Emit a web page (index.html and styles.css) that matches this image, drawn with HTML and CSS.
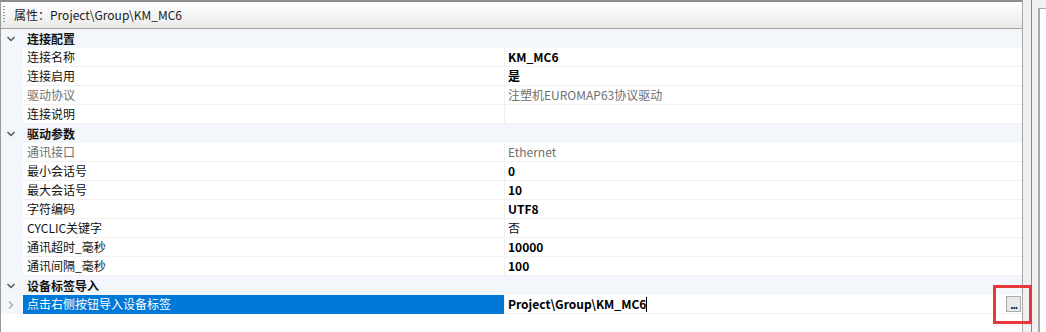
FILE: index.html
```html
<!DOCTYPE html>
<html lang="zh">
<head>
<meta charset="utf-8">
<link rel="stylesheet" href="styles.css">
</head>
<body>
<div class="frame">
  <div class="panel">
    <div class="titlebar">
      <span class="grip"></span>
      <span class="title">属性：Project\Group\KM_MC6</span>
    </div>
    <div class="grid">
      <div class="cat"><span class="gut"><svg width="10" height="10" viewBox="0 0 10 10"><path d="M1.5 3 L5 6.5 L8.5 3" fill="none" stroke="#555" stroke-width="1.4"/></svg></span><span class="catname">连接配置</span></div>
      <div class="row"><span class="gut"></span><span class="name">连接名称</span><span class="val b">KM_MC6</span></div>
      <div class="row"><span class="gut"></span><span class="name">连接启用</span><span class="val b">是</span></div>
      <div class="row"><span class="gut"></span><span class="name dim">驱动协议</span><span class="val dim">注塑机EUROMAP63协议驱动</span></div>
      <div class="row"><span class="gut"></span><span class="name">连接说明</span><span class="val"></span></div>
      <div class="cat"><span class="gut"><svg width="10" height="10" viewBox="0 0 10 10"><path d="M1.5 3 L5 6.5 L8.5 3" fill="none" stroke="#555" stroke-width="1.4"/></svg></span><span class="catname">驱动参数</span></div>
      <div class="row"><span class="gut"></span><span class="name dim">通讯接口</span><span class="val dim">Ethernet</span></div>
      <div class="row"><span class="gut"></span><span class="name">最小会话号</span><span class="val b">0</span></div>
      <div class="row"><span class="gut"></span><span class="name">最大会话号</span><span class="val b">10</span></div>
      <div class="row"><span class="gut"></span><span class="name">字符编码</span><span class="val b">UTF8</span></div>
      <div class="row"><span class="gut"></span><span class="name">CYCLIC关键字</span><span class="val">否</span></div>
      <div class="row"><span class="gut"></span><span class="name">通讯超时_毫秒</span><span class="val b">10000</span></div>
      <div class="row"><span class="gut"></span><span class="name">通讯间隔_毫秒</span><span class="val b">100</span></div>
      <div class="cat"><span class="gut"><svg width="10" height="10" viewBox="0 0 10 10"><path d="M1.5 3 L5 6.5 L8.5 3" fill="none" stroke="#555" stroke-width="1.4"/></svg></span><span class="catname">设备标签导入</span></div>
      <div class="row sel"><span class="gut"><svg width="10" height="10" viewBox="0 0 10 10"><path d="M3 1.5 L6.5 5 L3 8.5" fill="none" stroke="#a8a8a8" stroke-width="1.4"/></svg></span><span class="name">点击右侧按钮导入设备标签</span><span class="val b edit"><span>Project\Group\KM_MC6</span><span class="caret"></span><span class="spacer"></span><span class="dots">...</span></span></div>
    </div>
    <div class="hl"></div>
  </div>
  <div class="split"></div>
  <div class="side"><div class="sideinner"></div></div>
</div>
</body>
</html>
```

FILE: styles.css
```css
html, body {
  margin: 0;
  padding: 0;
  background: #f0f0f0;
}
body {
  width: 1046px;
  height: 332px;
  overflow: hidden;
  font-family: "Noto Sans CJK SC", "Noto Sans", sans-serif;
  font-size: 12px;
  color: #000;
}
.frame {
  display: flex;
  height: 332px;
}
.panel {
  position: relative;
  width: 1021px;
  border-left: 1px solid #9a9a9a;
  border-right: 1px solid #a8a8a8;
  background: #fff;
  display: flex;
  flex-direction: column;
}
.titlebar {
  height: 26px;
  border-top: 2px solid #8c8c8c;
  border-bottom: 1px solid #a0a0a0;
  background: linear-gradient(#ffffff, #e9e9e9);
  display: flex;
  align-items: center;
}
.grip {
  width: 2px;
  height: 18px;
  margin-left: 2px;
  margin-right: 9px;
  background-image: linear-gradient(#9a9a9a 50%, transparent 50%);
  background-size: 2px 3px;
}
.title {
  color: #1b1b1b;
  line-height: 16px;
}
.grid {
  display: flex;
  flex-direction: column;
}
.cat, .row {
  height: 19px;
  display: flex;
  align-items: stretch;
}
.cat {
  background: #f3f6fa;
}
.gut {
  width: 22px;
  flex: none;
  display: flex;
  align-items: center;
  justify-content: center;
  padding-right: 2px;
  box-sizing: border-box;
  background: #f3f6fa;
}
.catname {
  font-weight: bold;
  padding-left: 4px;
  line-height: 19px;
  color: #111;
}
.name {
  width: 481px;
  flex: none;
  box-sizing: border-box;
  padding-left: 4px;
  line-height: 18px;
  border-bottom: 1px solid #f0f0f0;
  color: #111;
}
.val {
  flex: 1;
  padding-left: 3px;
  line-height: 18px;
  border-left: 1px solid #f0f0f0;
  border-bottom: 1px solid #f0f0f0;
  color: #111;
}
.b {
  font-weight: bold;
  color: #000;
}
.dim {
  color: #707070;
  font-weight: normal;
}
.sel .name {
  background: #0078d7;
  color: #fff;
  border-bottom-color: #0078d7;
}
.edit {
  display: flex;
  align-items: center;
}
.caret {
  width: 1px;
  height: 15px;
  background: #000;
  margin-left: 0;
}
.spacer {
  flex: 1;
}
.dots {
  width: 13px;
  height: 14px;
  border: 1px solid #adadad;
  background: #e8e8e8;
  font-weight: bold;
  font-size: 10px;
  line-height: 16px;
  text-align: center;
  letter-spacing: -1px;
  margin-right: 1px;
  box-sizing: content-box;
  color: #111;
}
.hl {
  position: absolute;
  left: 992px;
  top: 285px;
  width: 33px;
  height: 33px;
  border: 3px solid #e8383a;
}
.split {
  width: 8px;
  border-right: 1px solid #8a8a8a;
  background: #f0f0f0;
}
.side {
  flex: 1;
  padding: 8px 0 0 6px;
  background: #f0f0f0;
}
.sideinner {
  height: 100%;
  border-left: 2px solid #a8a8a8;
  border-top: 1px solid #a8a8a8;
  background: #fff;
}
```
